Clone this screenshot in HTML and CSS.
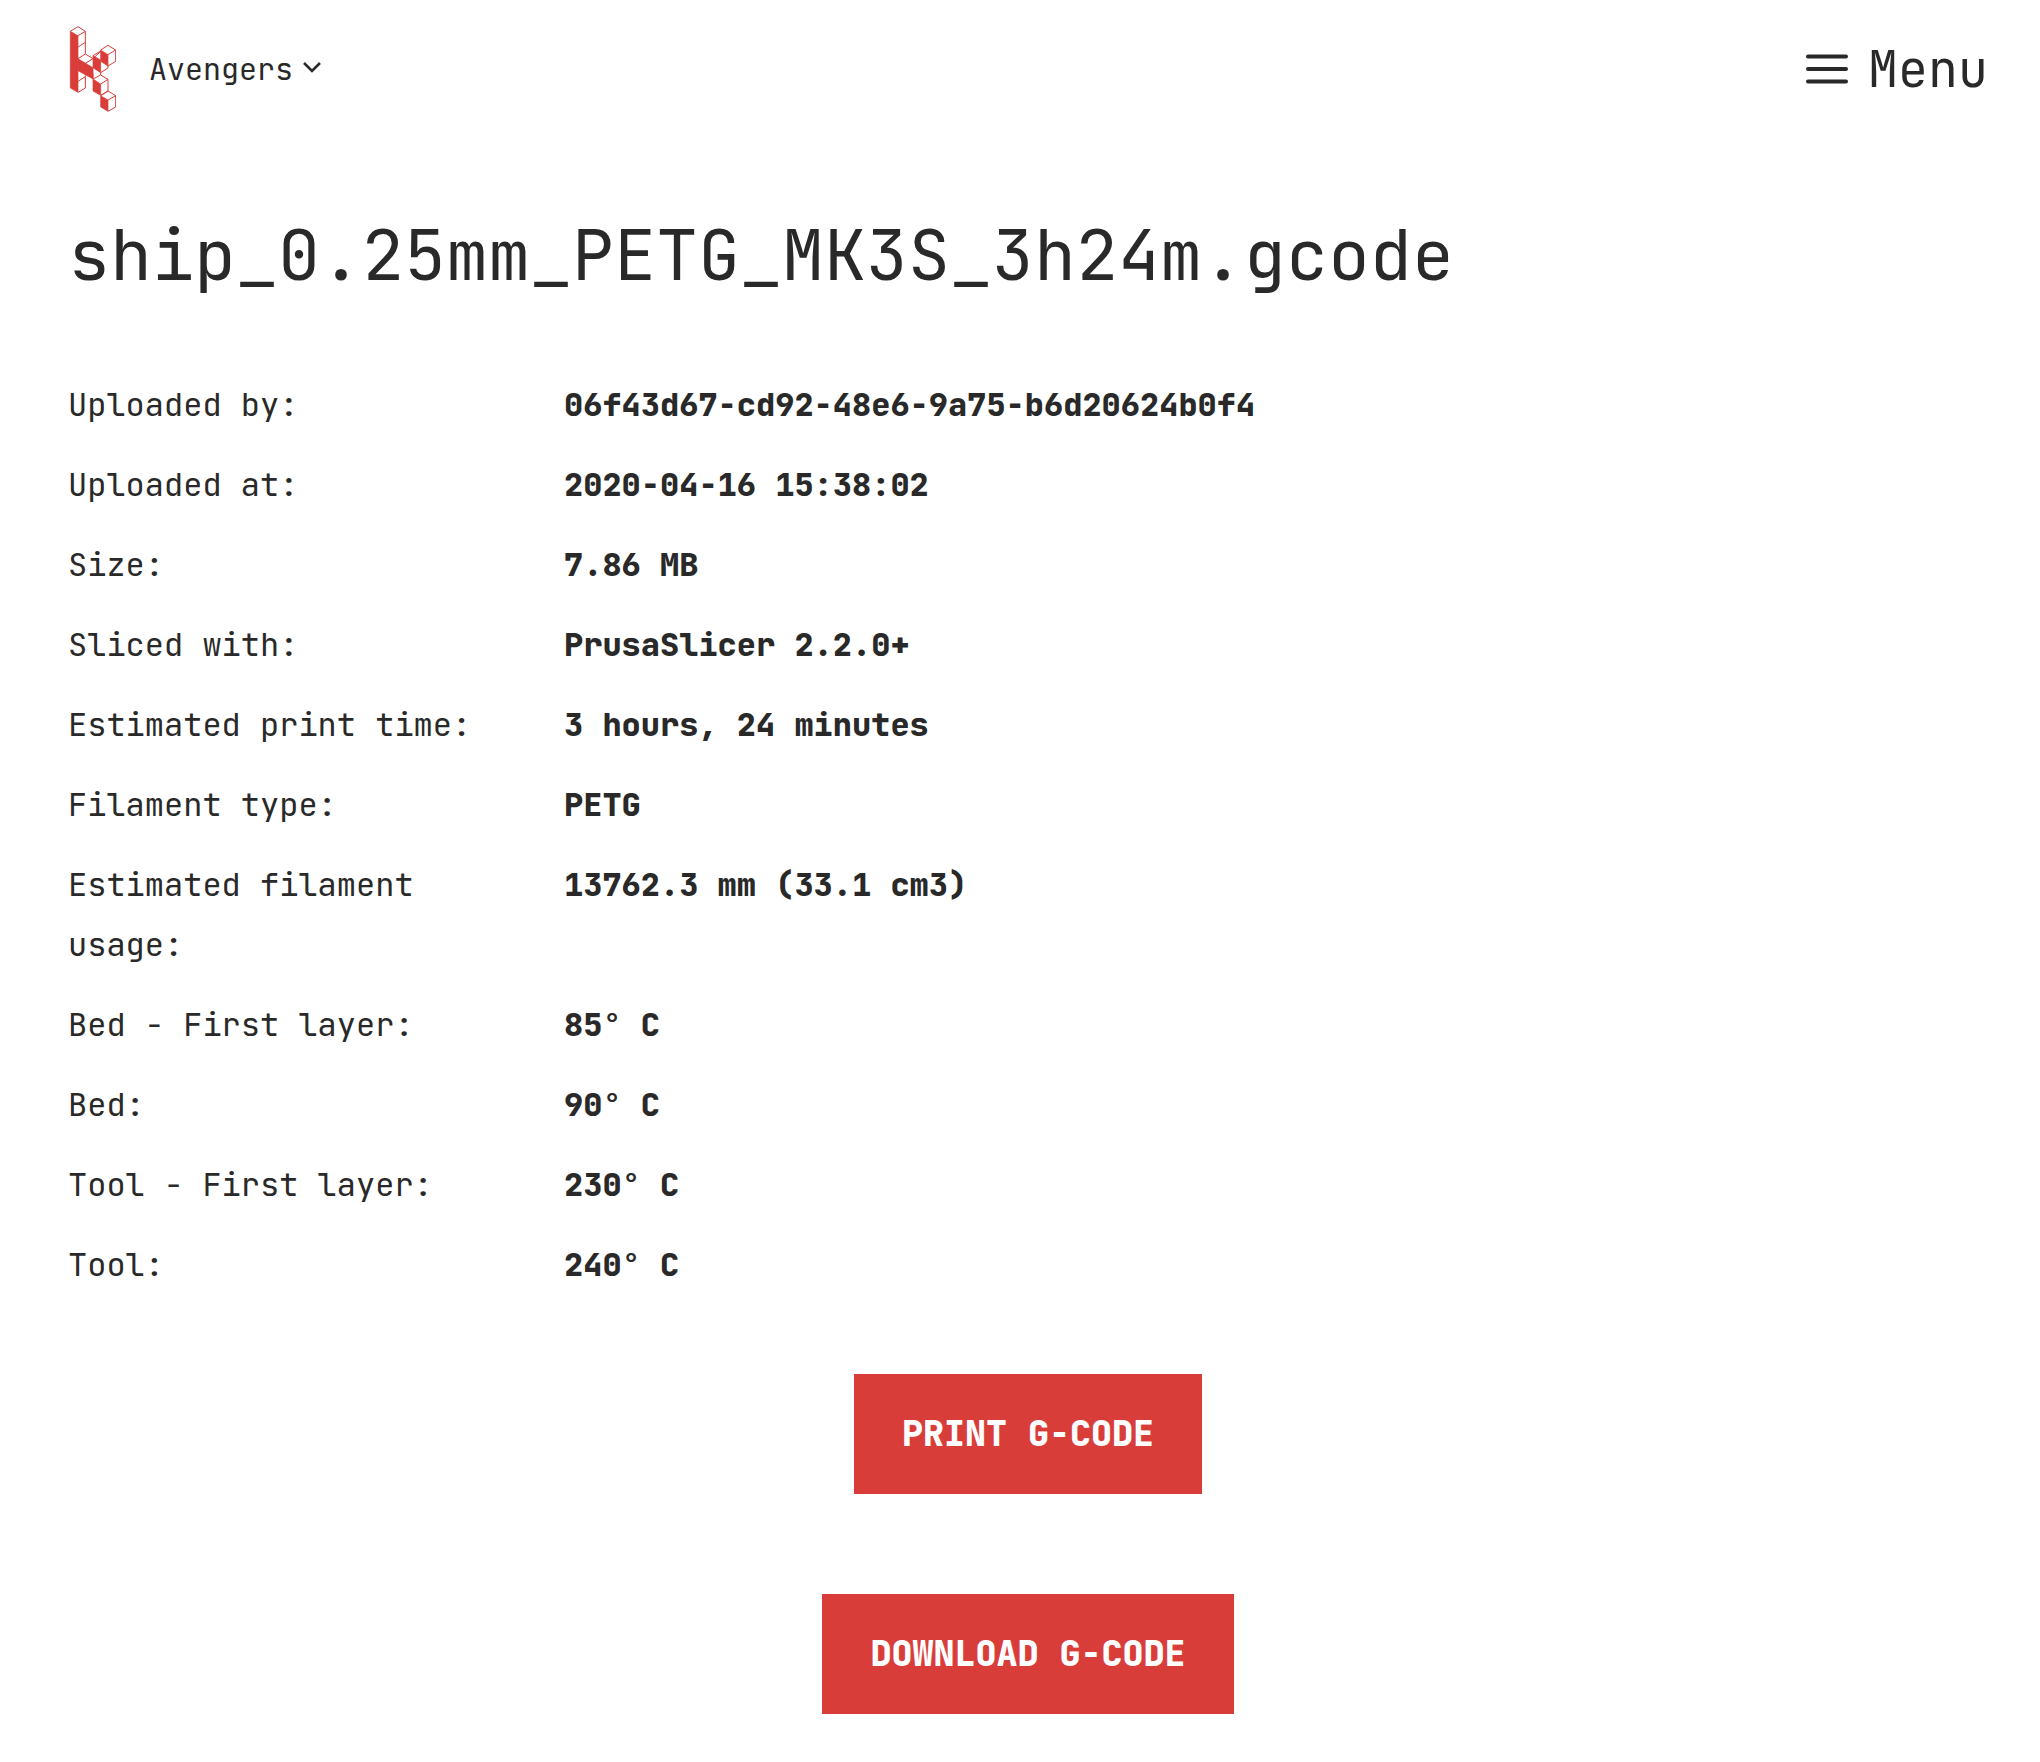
FILE: index.html
```html
<!DOCTYPE html>
<html lang="en">
<head>
<meta charset="utf-8">
<meta name="viewport" content="width=device-width, initial-scale=1">
<title>ship_0.25mm_PETG_MK3S_3h24m.gcode</title>
<link rel="stylesheet" href="styles.css">
</head>
<body>
<header class="header">
  <div class="brand">
    <a class="logo" href="#" aria-label="Home">
      <svg width="48" height="88" viewBox="54 45 144 264" fill="none" stroke="#d93d3a" stroke-width="3" stroke-linejoin="round">
        <path d="M61 64 84 50 106 64V132L129 146 152 124M84 77 106 64M84 111 106 97M84 146 106 132M106 160 129 146M84 214 106 200M84 247 106 234V196M129 137 152 123M152 188 174 174V166M129 207 152 195 174 208 152 222M174 208V243M152 257 174 243 197 257 174 270M197 257V291L174 304M152 120 174 106 197 120 174 134M197 120V154L174 168M152 256 174 243M129 190V207M152 188V195"/>
        <path fill="#d93d3a" stroke-width="2" d="M61 64 84 77V146L129 173V207L84 182V247L61 234ZM129 137 152 150V188L129 173ZM152 120 174 134V168L152 154ZM129 207 152 222V256L129 243ZM152 257 174 270V304L152 291Z"/>
      </svg>
    </a>
    <button class="team" type="button">Avengers
      <svg width="18" height="16" viewBox="0 0 18 16" fill="none" stroke="currentColor" stroke-width="2.500"><path d="M1 2 9 10 17 2"/></svg>
    </button>
  </div>
  <button class="menu" type="button">
    <svg width="42" height="30" viewBox="0 0 42 30" stroke="currentColor" stroke-width="4" stroke-linecap="round"><path d="M2 2.500H40M2 15H40M2 27.500H40"/></svg>
    Menu
  </button>
</header>
<main class="content">
  <h1 class="title">ship_0.25mm_PETG_MK3S_3h24m.gcode</h1>
  <dl class="details">
    <dt>Uploaded by:</dt><dd>06f43d67-cd92-48e6-9a75-b6d20624b0f4</dd>
    <dt>Uploaded at:</dt><dd>2020-04-16 15:38:02</dd>
    <dt>Size:</dt><dd>7.86 MB</dd>
    <dt>Sliced with:</dt><dd>PrusaSlicer 2.2.0+</dd>
    <dt>Estimated print time:</dt><dd>3 hours, 24 minutes</dd>
    <dt>Filament type:</dt><dd>PETG</dd>
    <dt>Estimated filament usage:</dt><dd>13762.3 mm (33.1 cm3)</dd>
    <dt>Bed - First layer:</dt><dd>85° C</dd>
    <dt>Bed:</dt><dd>90° C</dd>
    <dt>Tool - First layer:</dt><dd>230° C</dd>
    <dt>Tool:</dt><dd>240° C</dd>
  </dl>
  <div class="actions">
    <button class="action" type="button">PRINT G-CODE</button>
    <button class="action" type="button">DOWNLOAD G-CODE</button>
  </div>
</main>
</body>
</html>
```
FILE: styles.css
```css
* {
  box-sizing: border-box;
}

body {
  margin: 0;
  padding: 0 52px 48px 68px;
  background: #fff;
  color: #292929;
  font-family: "JetBrains Mono", "DejaVu Sans Mono", monospace;
  font-size: 32px;
  line-height: 60px;
}

button {
  padding: 0;
  border: 0;
  background: none;
  color: inherit;
  font-family: inherit;
  cursor: pointer;
}

svg {
  display: block;
}

.header,
.brand,
.team,
.menu {
  display: flex;
  align-items: center;
}

.header {
  justify-content: space-between;
  height: 138px;
}

.brand {
  gap: 33px;
}

.team {
  gap: 10px;
  font-size: 30px;
}

.menu {
  gap: 20px;
  font-size: 50px;
}

.title {
  margin: 75px 0 78px;
  font-size: 70px;
  font-weight: 400;
  line-height: 84px;
  overflow-wrap: anywhere;
}

.details {
  display: grid;
  grid-template-columns: 456px 1fr;
  gap: 20px 40px;
  margin: 0 0 79px;
}

.details dd {
  margin: 0;
  font-weight: 800;
}

.actions {
  display: flex;
  flex-direction: column;
  align-items: center;
  gap: 100px;
}

.action {
  padding: 30px 48px;
  background: #d93d3a;
  color: #fff;
  font-size: 35px;
  font-weight: 800;
  line-height: 60px;
}
```
